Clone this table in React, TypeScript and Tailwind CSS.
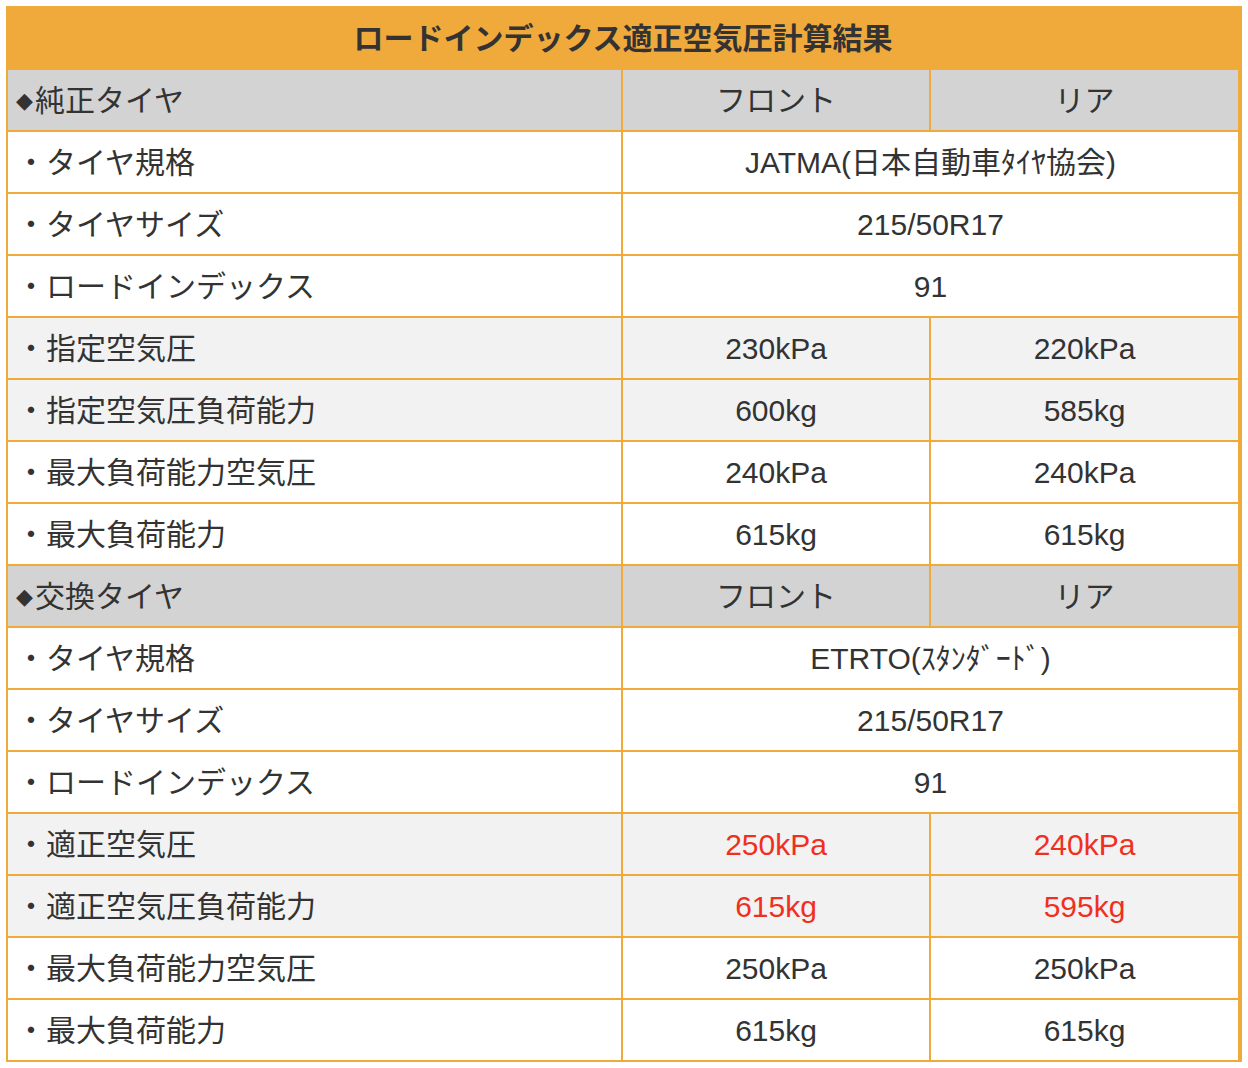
import React from "react";

type Row =
  | { kind: "head"; label: string }
  | { kind: "span"; label: string; value: string; stripe?: boolean }
  | { kind: "pair"; label: string; front: string; rear: string; stripe?: boolean; red?: boolean };

const rows: Row[] = [
  { kind: "head", label: "純正タイヤ" },
  { kind: "span", label: "・タイヤ規格", value: "JATMA(日本自動車ﾀｲﾔ協会)" },
  { kind: "span", label: "・タイヤサイズ", value: "215/50R17" },
  { kind: "span", label: "・ロードインデックス", value: "91" },
  { kind: "pair", label: "・指定空気圧", front: "230kPa", rear: "220kPa", stripe: true },
  { kind: "pair", label: "・指定空気圧負荷能力", front: "600kg", rear: "585kg", stripe: true },
  { kind: "pair", label: "・最大負荷能力空気圧", front: "240kPa", rear: "240kPa" },
  { kind: "pair", label: "・最大負荷能力", front: "615kg", rear: "615kg" },
  { kind: "head", label: "交換タイヤ" },
  { kind: "span", label: "・タイヤ規格", value: "ETRTO(ｽﾀﾝﾀﾞｰﾄﾞ)" },
  { kind: "span", label: "・タイヤサイズ", value: "215/50R17" },
  { kind: "span", label: "・ロードインデックス", value: "91" },
  { kind: "pair", label: "・適正空気圧", front: "250kPa", rear: "240kPa", stripe: true, red: true },
  { kind: "pair", label: "・適正空気圧負荷能力", front: "615kg", rear: "595kg", stripe: true, red: true },
  { kind: "pair", label: "・最大負荷能力空気圧", front: "250kPa", rear: "250kPa" },
  { kind: "pair", label: "・最大負荷能力", front: "615kg", rear: "615kg" },
];

export default function App() {
  return (
    <div
      className="bg-white min-h-[1068px] pt-[6px] pl-[6px] text-[#333333]"
      style={{ fontFamily: '"Liberation Sans", "Noto Sans CJK JP", sans-serif' }}
    >
      <div className="w-[1236px] border-l-2 border-r-4 border-[#f0a93b]">
        <div className="h-[64px] bg-[#f0a93b] flex items-center justify-center text-[30px] font-bold">
          ロードインデックス適正空気圧計算結果
        </div>
        {rows.map((r, i) => {
          if (r.kind === "head") {
            return (
              <div key={i} className="flex h-[62px] border-b-2 border-[#f0a93b] bg-[#d3d3d3] text-[30px]">
                <div className="w-[615px] border-r-2 border-[#f0a93b] flex items-center pl-[8px]">
                  <span className="text-[22px] mr-[2px]" style={{ fontFamily: '"DejaVu Sans", sans-serif' }}>◆</span>
                  <span>{r.label}</span>
                </div>
                <div className="w-[308px] border-r-2 border-[#f0a93b] flex items-center justify-center">フロント</div>
                <div className="w-[307px] flex items-center justify-center">リア</div>
              </div>
            );
          }
          const bg = r.stripe ? "bg-[#f2f2f2]" : "bg-white";
          if (r.kind === "span") {
            return (
              <div key={i} className={`flex h-[62px] border-b-2 border-[#f0a93b] text-[30px] ${bg}`}>
                <div className="w-[615px] border-r-2 border-[#f0a93b] flex items-center pl-[8px]">{r.label}</div>
                <div className="w-[615px] flex items-center justify-center">{r.value}</div>
              </div>
            );
          }
          const valColor = r.red ? "text-[#f0301f]" : "";
          return (
            <div key={i} className={`flex h-[62px] border-b-2 border-[#f0a93b] text-[30px] ${bg}`}>
              <div className="w-[615px] border-r-2 border-[#f0a93b] flex items-center pl-[8px]">{r.label}</div>
              <div className={`w-[308px] border-r-2 border-[#f0a93b] flex items-center justify-center ${valColor}`}>{r.front}</div>
              <div className={`w-[307px] flex items-center justify-center ${valColor}`}>{r.rear}</div>
            </div>
          );
        })}
      </div>
    </div>
  );
}
